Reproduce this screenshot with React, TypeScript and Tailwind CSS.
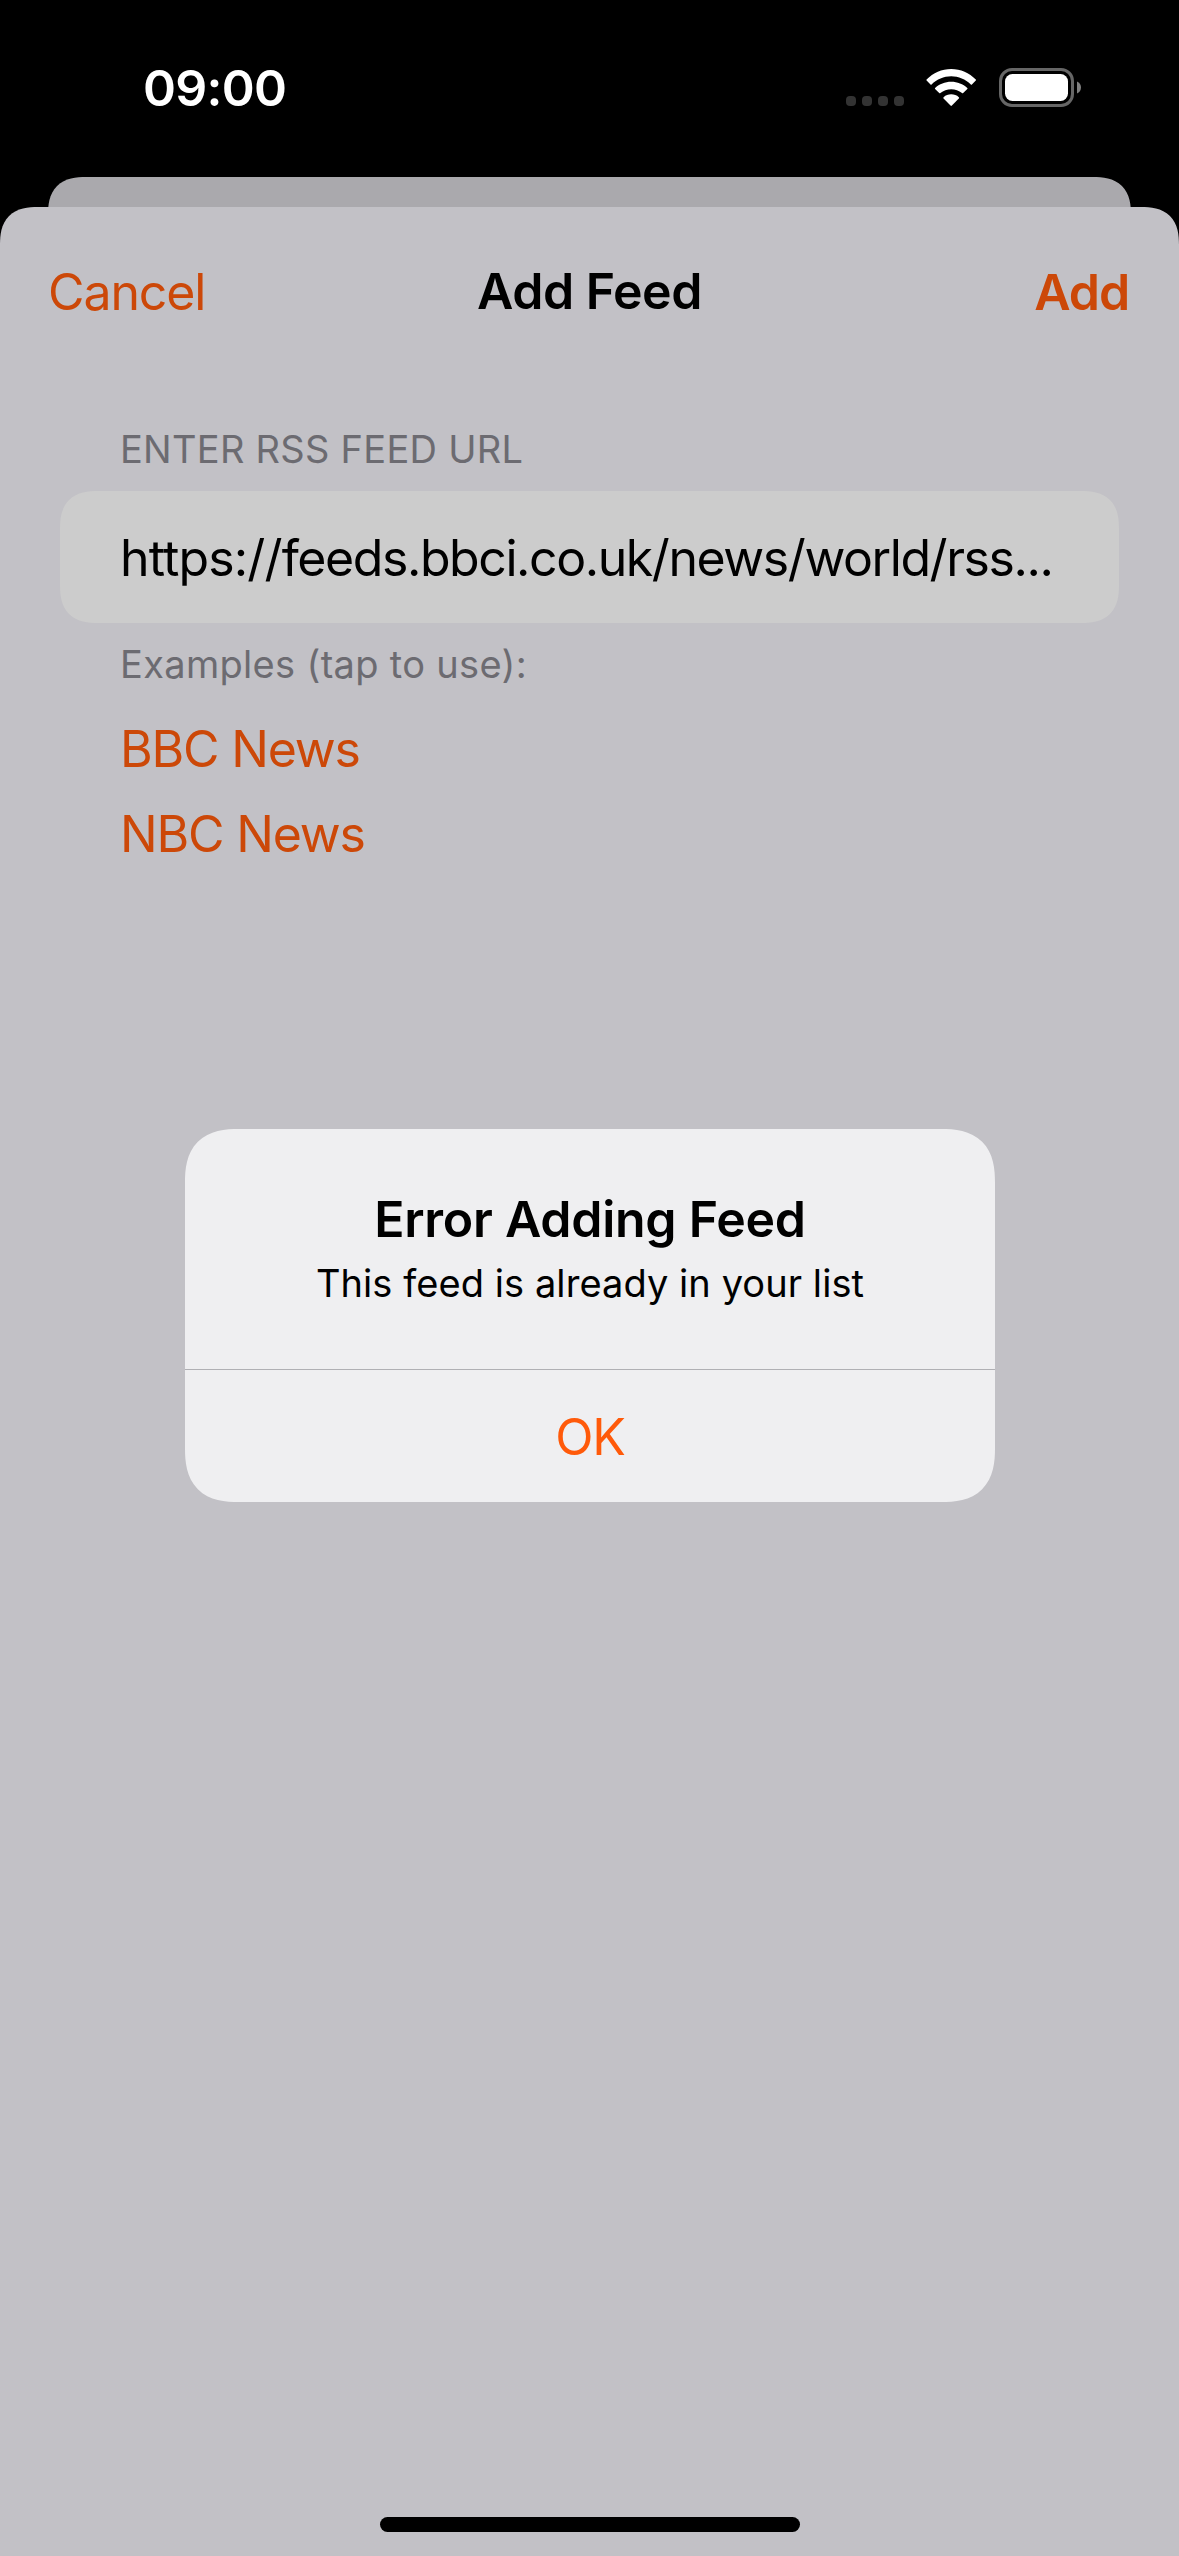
function StatusBar() {
  return (
    <div className="flex h-[177px] shrink-0 items-start justify-between pr-[98px] pl-[143px] text-white">
      <span className="mt-[58px] text-[50px] leading-[60px] font-semibold tracking-[-0.72px]">09:00</span>
      <div className="mt-[68px] flex h-[39px] items-start">
        <div className="mt-7 mr-[22px] flex gap-1.5">
          {[0, 1, 2, 3].map((dot) => (
            <span key={dot} className="size-2.5 rounded-[4px] bg-[#333333]" />
          ))}
        </div>
        <svg className="mt-px mr-[22px] h-[38px] w-[51px]" viewBox="0 0 51 38" fill="currentColor">
          <path d="M.6 10.6C7.2 3.9 15.8 0 25.2 0S43.2 3.9 49.8 10.6Q50.3 11.1 49.8 11.6L45.9 15.6Q45.4 16.1 44.8 15.5C39.5 10.3 32.6 7.3 25.2 7.3S10.9 10.3 5.6 15.5Q5 16.1 4.5 15.6L.6 11.6Q.1 11.1 .6 10.6Z" />
          <path d="M9.1 18.9C13.4 15 19 12.7 25.2 12.7S37 15 41.3 18.9Q41.8 19.5 41.3 20L37.2 24.1Q36.6 24.6 36 24.1C33 21.7 29.2 20.3 25.2 20.3S17.4 21.7 14.4 24.1Q13.8 24.6 13.2 24.1L9.1 20Q8.6 19.5 9.1 18.9Z" />
          <path d="M17.6 28.2C19.7 26.2 22.3 25.3 25.2 25.3S30.7 26.2 32.8 28.2Q33.4 28.8 32.8 29.5L25.9 36.6Q25.2 37.3 24.5 36.6L17.6 29.5Q17 28.8 17.6 28.2Z" />
        </svg>
        <svg className="h-[39px] w-[82px]" viewBox="0 0 82 39" fill="none">
          <rect x="1.5" y="1.5" width="72" height="36" rx="11.5" stroke="#666666" strokeWidth="3" />
          <rect x="6" y="6" width="63" height="27" rx="7.5" fill="#ffffff" />
          <path d="M78 13.5C80.4 14.5 82 16.8 82 19.5S80.4 24.5 78 25.5Z" fill="#808080" />
        </svg>
      </div>
    </div>
  );
}

function NavBar() {
  return (
    <div className="grid grid-cols-3 pr-[50px] pl-12 pt-[54px] text-[50px] leading-[60px] whitespace-nowrap">
      <button className="mt-px justify-self-start text-[#cc4808] tracking-[-1.1px]">Cancel</button>
      <h1 className="ml-0.5 justify-self-center font-semibold text-black tracking-[-0.5px]">Add Feed</h1>
      <button className="mt-px justify-self-end font-semibold text-[#cc4808] tracking-[-1.1px]">Add</button>
    </div>
  );
}

function FeedForm() {
  return (
    <div className="mx-[60px] mt-[104px] flex flex-col">
      <p className="pl-[60px] text-[38px] leading-[46px] text-[#6c6b71] tracking-[0.27px]">ENTER RSS FEED URL</p>
      <div className="mt-[19px] h-[132px] rounded-[38px] bg-[#cccccc] px-[60px] pt-[37px] text-[50px] leading-[60px] whitespace-nowrap text-black [corner-shape:superellipse(1.35)]">
        <span className="tracking-[-0.85px]">https://</span>
        <span className="tracking-[-1.43px]">feeds.bbci.co.uk/news/world/rss...</span>
      </div>
      <p className="mt-[18px] pl-[60px] text-[38px] leading-[46px] text-[#6c6b71] tracking-[0.32px]">Examples (tap to use):</p>
      <div className="mt-8 flex flex-col items-start gap-[25px] pl-[60px] text-[50px] leading-[60px] text-[#cc4808] tracking-[-1.19px]">
        <button>BBC News</button>
        <button>NBC News</button>
      </div>
    </div>
  );
}

function Alert() {
  return (
    <div className="absolute top-[1129px] left-[185px] flex h-[373px] w-[810px] flex-col rounded-[54px] bg-[#efeff1] text-center text-black [corner-shape:superellipse(1.35)]">
      <h2 className="mt-[60px] text-[50px] leading-[60px] font-semibold tracking-[-0.26px]">Error Adding Feed</h2>
      <p className="mt-[11px] text-[38px] leading-[46px] tracking-[0.07px]">This feed is already in your list</p>
      <div className="mt-[63px] h-px bg-[#b0b0b4]" />
      <button className="mt-[37px] text-[50px] leading-[60px] text-[#ff5a0a] tracking-[-1.2px]">OK</button>
    </div>
  );
}

export default function App() {
  return (
    <div className="relative flex h-[2556px] w-[1179px] flex-col overflow-hidden bg-black font-['Inter',sans-serif]">
      <StatusBar />
      <div className="mx-12 -mb-[30px] h-[60px] shrink-0 rounded-t-[38px] bg-[#aaa9ad] [corner-shape:superellipse(1.35)]" />
      <div className="flex flex-1 flex-col rounded-t-[38px] bg-[#c2c1c6] [corner-shape:superellipse(1.35)]">
        <NavBar />
        <FeedForm />
        <div className="mt-auto mb-6 h-[15px] w-[420px] self-center rounded-full bg-black" />
      </div>
      <Alert />
    </div>
  );
}
